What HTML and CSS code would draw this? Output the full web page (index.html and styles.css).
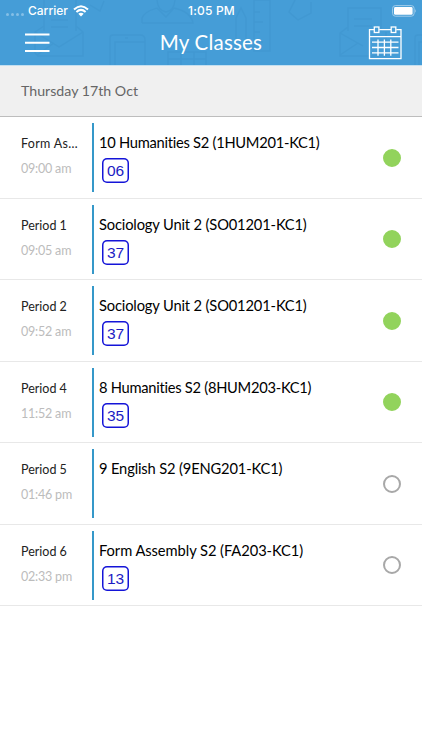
FILE: index.html
```html
<!DOCTYPE html>
<html lang="en">
<head>
  <meta charset="UTF-8" />
  <meta name="viewport" content="width=device-width, initial-scale=1.0"/>
  <title>My Classes</title>
  <link rel="stylesheet" href="styles.css">
</head>
<body>

<!-- Header -->
<header class="header">
  <svg class="header-pattern" viewBox="0 0 422 66" width="422" height="66">
    <path d="M44 31 V0 M76 0 V31 M51 20 H68 M51 27 H68 M44 26 L35 32 V53 L38 56 H83 V32 L76 26 M35 32 L59 47 L83 32 M37 55 L54 43"/>
    <path d="M90 5 L100 11 L104 1 M110 66 V38 Q110 35 113 35 H140 Q145 35 145 40 V66 M115 66 V42 H145 M125 38 H128"/>
    <path d="M142 23 V18 Q144 12 157 8 M157 0 Q158 11 166 12 Q174 11 175 0 M174 8 Q191 12 193 23 H142 M157 8 L166 17 L174 8"/>
    <path d="M168 66 V52 H206 V66 M181 52 V66 M194 52 V66 M168 59 H206 M236 45 V18 L241 8 L246 18 V45 Z M254 51 V0 H270 V51 Z M254 12 H260 M254 22 H263 M254 32 H260 M254 42 H263"/>
    <path d="M295 0 L289 12 L298 20 L311 13 V2 M348 31 V8 H381 V31 M354 19 H372 M354 26 H372 M348 27 L340 33 V56 H386 V32 M340 33 L363 46 M340 55 L358 43"/>
    <path d="M415 66 V38 Q415 35 418 35 H422 M419 66 V42 H422"/>
  </svg>

  <div class="status-bar">
    <div class="carrier">
      <span class="signal"><i></i><i></i><i></i><i></i></span>
      <span>Carrier</span>
      <svg class="wifi" viewBox="0 0 16 12" width="16" height="12">
        <path d="M1 4.4 Q8 -2 15 4.4" />
        <path d="M3.4 7 Q8 2.8 12.6 7" />
        <path class="dot" d="M5.3 8.7 Q8 6.6 10.7 8.7 L8 11.5 Z" />
      </svg>
    </div>
    <div class="clock">1:05 PM</div>
    <svg class="battery" viewBox="0 0 26 12" width="26" height="12">
      <rect class="case" x="0.6" y="0.6" width="21.5" height="10.6" rx="2.8"/>
      <rect class="level" x="2" y="2" width="18.6" height="7.8" rx="1.4"/>
      <path class="cap" d="M23.2 4 Q24.8 5.9 23.2 7.8 Z"/>
    </svg>
  </div>

  <div class="nav-bar">
    <svg class="menu-toggle" viewBox="0 0 25 20" width="25" height="20">
      <path d="M0 1.5 H24.5 M0 9.8 H24.5 M0 18.1 H24.5"/>
    </svg>
    <h1>My Classes</h1>
    <svg class="calendar" viewBox="0 0 34 34" width="34" height="34">
      <path d="M6 3.7 H1.5 V32.6 H33 V3.7 H28.3 M11.2 3.7 H23 M1.5 10.7 H33"/>
      <rect x="6.3" y="1" width="4.6" height="5.5"/>
      <rect x="23.2" y="1" width="4.6" height="5.5"/>
      <path d="M4 16.2 H30.5 M4 21.5 H30.5 M4 26.8 H30.5 M10 13.5 V29.8 M16.4 13.5 V29.8 M22.8 13.5 V29.8"/>
    </svg>
  </div>
</header>

<!-- Selected day -->
<div class="day">Thursday 17th Oct</div>

<!-- Class list -->
<ul class="classes">
  <li>
    <div class="time"><p class="period wide">Form As…</p><p class="hour">09:00 am</p></div>
    <div class="details"><h2 class="tight">10 Humanities S2 (1HUM201-KC1)</h2><span class="room">06</span></div>
    <span class="status done"></span>
  </li>
  <li>
    <div class="time"><p class="period">Period 1</p><p class="hour">09:05 am</p></div>
    <div class="details"><h2>Sociology Unit 2 (SO01201-KC1)</h2><span class="room">37</span></div>
    <span class="status done"></span>
  </li>
  <li>
    <div class="time"><p class="period">Period 2</p><p class="hour">09:52 am</p></div>
    <div class="details"><h2>Sociology Unit 2 (SO01201-KC1)</h2><span class="room">37</span></div>
    <span class="status done"></span>
  </li>
  <li>
    <div class="time"><p class="period">Period 4</p><p class="hour">11:52 am</p></div>
    <div class="details"><h2 class="tight">8 Humanities S2 (8HUM203-KC1)</h2><span class="room">35</span></div>
    <span class="status done"></span>
  </li>
  <li>
    <div class="time"><p class="period">Period 5</p><p class="hour">01:46 pm</p></div>
    <div class="details"><h2>9 English S2 (9ENG201-KC1)</h2></div>
    <span class="status"></span>
  </li>
  <li>
    <div class="time"><p class="period">Period 6</p><p class="hour">02:33 pm</p></div>
    <div class="details"><h2 class="loose">Form Assembly S2 (FA203-KC1)</h2><span class="room">13</span></div>
    <span class="status"></span>
  </li>
</ul>

</body>
</html>
```
FILE: styles.css
```css
* {
  box-sizing: border-box;
}

body {
  margin: 0;
  font-family: Lato, sans-serif;
  background: #fff;
  color: #000;
}

h1, h2, p, ul {
  margin: 0;
  padding: 0;
  font-weight: normal;
}

/* Header */
.header {
  position: relative;
  height: 66px;
  background: #459dd7;
  border-bottom: 1px solid #c3dff0;
  color: #fff;
  overflow: hidden;
}

.header-pattern {
  position: absolute;
  top: 0;
  left: 0;
  fill: none;
  stroke: #3b90c9;
  stroke-width: 1.3;
  opacity: 0.35;
}

.status-bar {
  position: relative;
  display: grid;
  grid-template-columns: 1fr auto 1fr;
  align-items: center;
  height: 21px;
  padding: 0 5px 0 6px;
  font-family: Inter, sans-serif;
  font-size: 12px;
  font-weight: 500;
}

.carrier {
  display: flex;
  align-items: center;
}

.signal {
  display: flex;
  gap: 2px;
  margin: 7px 4px 0 0;
}

.signal i {
  width: 3px;
  height: 3px;
  border-radius: 50%;
  background: #84bfe6;
}

.wifi {
  margin-left: 5px;
  fill: none;
  stroke: #fff;
  stroke-width: 2;
}

.wifi .dot {
  fill: #fff;
  stroke: none;
}

.clock {
  letter-spacing: 0.2px;
}

.battery {
  justify-self: end;
  margin-right: -1px;
}

.battery .case {
  fill: none;
  stroke: #a2cdeb;
}

.battery .level {
  fill: #fff;
}

.battery .cap {
  fill: #a2cdeb;
}

.nav-bar {
  position: relative;
  display: flex;
  justify-content: space-between;
  align-items: center;
  height: 44px;
  padding: 0 20px 0 25px;
}

.menu-toggle {
  margin-right: 9px;
  stroke: #fff;
  stroke-width: 2;
}

.nav-bar h1 {
  margin: 0 5px 2px 0;
  font-size: 20.5px;
  line-height: 24px;
  letter-spacing: 0.2px;
}

.calendar {
  fill: none;
  stroke: #fff;
  stroke-width: 1.3;
}

/* Selected day */
.day {
  height: 51px;
  padding-left: 21px;
  background: #f0f0f0;
  border-bottom: 1px solid #bdbdbd;
  color: #666;
  font-size: 14.2px;
  line-height: 50px;
}

/* Class list */
.classes {
  list-style: none;
}

.classes li {
  display: flex;
  height: 81.5px;
  padding: 6px 21px 5.5px;
  border-bottom: 1px solid #e8e8e8;
}

.time {
  width: 71px;
  padding-top: 13px;
  font-size: 12.5px;
  line-height: 16px;
  white-space: nowrap;
}

.period {
  color: #222;
}

.period.wide {
  letter-spacing: 0.3px;
}

.hour {
  margin-top: 9px;
  letter-spacing: -0.2px;
  color: #bcbcbc;
}

.details {
  flex: 1;
  padding: 9px 0 0 5px;
  border-left: 2px solid #3598c9;
}

.details h2 {
  font-size: 14.7px;
  line-height: 20px;
  letter-spacing: -0.15px;
  white-space: nowrap;
}

.details h2.tight {
  letter-spacing: -0.27px;
}

.details h2.loose {
  letter-spacing: -0.06px;
}

.room {
  display: block;
  width: fit-content;
  height: 25px;
  margin: 6px 0 0 3px;
  padding: 0 5px;
  border-radius: 5px;
  box-shadow: inset 0 0 0 1.5px #1414d8;
  color: #1c1cc4;
  font-family: "Liberation Sans", sans-serif;
  font-size: 15.5px;
  line-height: 25px;
}

.status {
  width: 18px;
  height: 18px;
  align-self: center;
  border: 2px solid #a8a8a8;
  border-radius: 50%;
}

.status.done {
  background: #92d35c;
  border-color: #92d35c;
}
```
